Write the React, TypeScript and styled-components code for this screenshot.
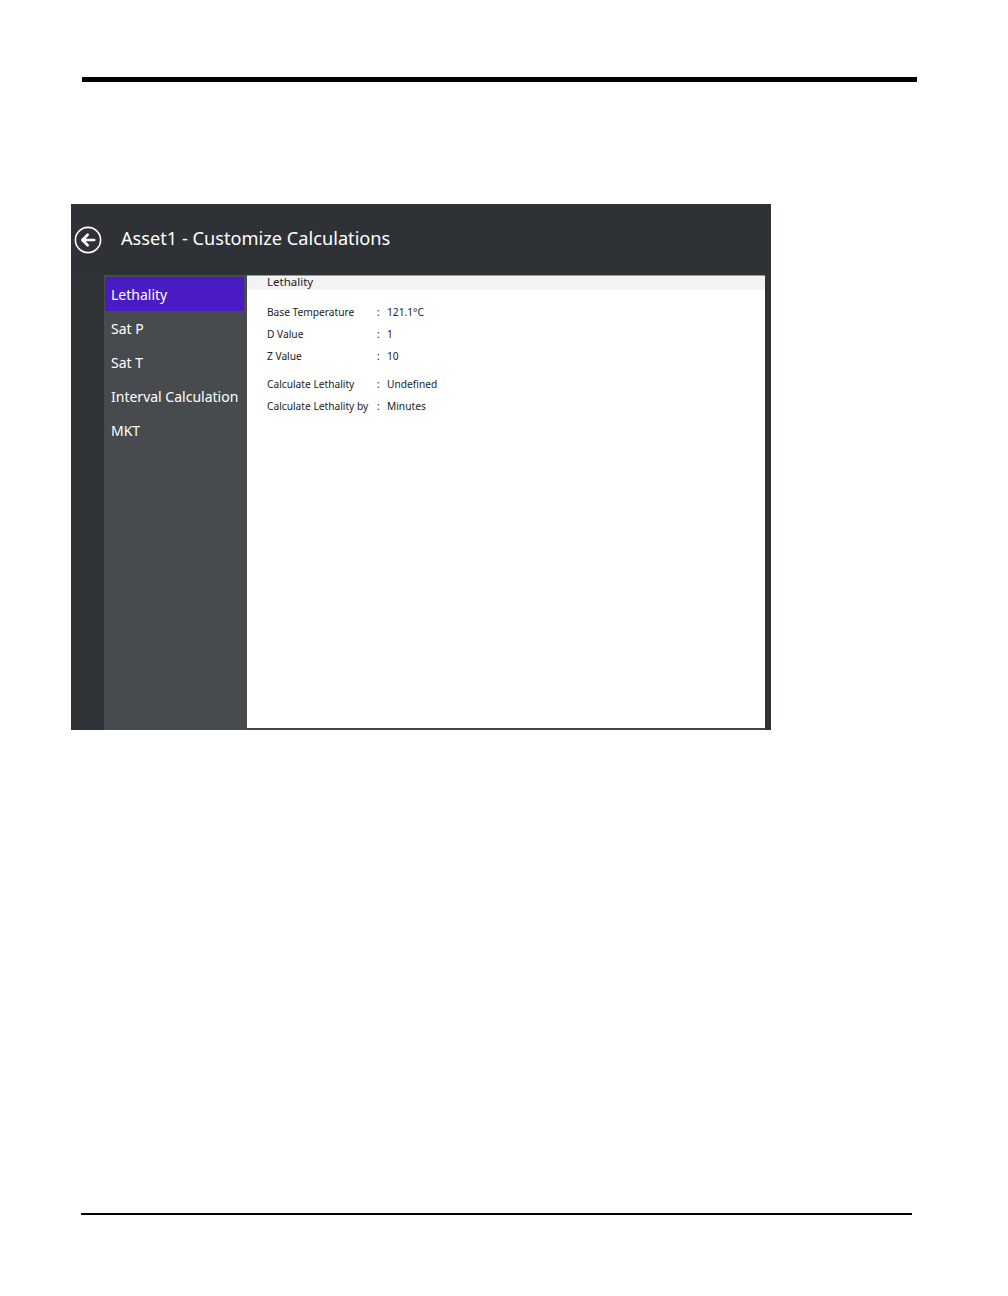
import React from 'react'
import styled, { createGlobalStyle } from 'styled-components'

const GlobalStyle = createGlobalStyle`
  html, body {
    margin: 0;
    padding: 0;
    background: #ffffff;
  }
  body {
    font-family: 'Noto Sans', 'Open Sans', sans-serif;
  }
`

const Page = styled.div`
  width: 1008px;
  height: 1296px;
  padding-top: 77px;
  box-sizing: border-box;
  display: flex;
  flex-direction: column;
`

const Rule = styled.div<{ $left: number; $width: number; $thick: number; $top: number }>`
  margin-left: ${(p) => p.$left}px;
  margin-top: ${(p) => p.$top}px;
  width: ${(p) => p.$width}px;
  height: ${(p) => p.$thick}px;
  background: #000000;
`

const Shot = styled.div`
  margin-top: 122px;
  margin-left: 71px;
  width: 700px;
  height: 526px;
  background: #2e3135;
  display: flex;
  flex-direction: column;
`

const Header = styled.header`
  height: 71px;
  display: flex;
  align-items: center;
  padding-left: 3px;
  box-sizing: border-box;
`

const BackButton = styled.div`
  width: 28px;
  height: 28px;
  display: flex;
  align-items: center;
  justify-content: center;
  margin-top: 1px;
`

const Title = styled.h1`
  margin: 0 0 4px 19px;
  font-size: 18.2px;
  font-weight: 400;
  color: #ffffff;
  letter-spacing: 0;
`

const Body = styled.div`
  flex: 1;
  display: flex;
`

const LeftStrip = styled.div`
  width: 33px;
  background: #303336;
`

const Sidebar = styled.nav`
  width: 143px;
  background: #474b4d;
  padding-top: 2px;
  display: flex;
  flex-direction: column;
`

const NavItem = styled.div<{ $active?: boolean }>`
  width: 139px;
  height: 34px;
  margin-left: 1px;
  padding-left: 6px;
  box-sizing: border-box;
  display: flex;
  align-items: center;
  font-size: 14px;
  color: #ffffff;
  background: ${(p) => (p.$active ? '#4a1bc4' : 'transparent')};
`

const PanelWrap = styled.div`
  width: 518px;
  display: flex;
  flex-direction: column;
  background: #444649;
`

const Panel = styled.section`
  height: 453px;
  background: #ffffff;
  border-top: 1px solid #9a9a9a;
  box-sizing: border-box;
`

const PanelHeading = styled.div`
  height: 14px;
  background: #f3f3f3;
  padding-left: 20px;
  font-size: 11.5px;
  line-height: 12px;
  color: #222222;
`

const Fields = styled.div`
  padding: 11px 0 0 20px;
  display: flex;
  flex-direction: column;
`

const Group = styled.div`
  display: flex;
  flex-direction: column;
  & + & {
    margin-top: 6px;
  }
`

const Row = styled.div`
  height: 22px;
  display: grid;
  grid-template-columns: 110px 10px auto;
  align-items: center;
  font-size: 10.2px;
  color: #222222;
`

const RightStrip = styled.div`
  width: 6px;
  background: #2e3135;
`

const items = ['Lethality', 'Sat P', 'Sat T', 'Interval Calculation', 'MKT']

const groups = [
  [
    ['Base Temperature', '121.1°C'],
    ['D Value', '1'],
    ['Z Value', '10'],
  ],
  [
    ['Calculate Lethality', 'Undefined'],
    ['Calculate Lethality by', 'Minutes'],
  ],
]

export default function App() {
  return (
    <>
      <GlobalStyle />
      <Page>
        <Rule $left={82} $width={835} $thick={5} $top={0} />
        <Shot>
          <Header>
            <BackButton>
              <svg width="28" height="28" viewBox="0 0 28 28" fill="none" stroke="#ffffff">
                <circle cx="14" cy="14" r="12.6" strokeWidth="1.6" />
                <path d="M20.2 14H8.5M13.6 8.8L8.4 14l5.2 5.2" strokeWidth="2.7" strokeLinecap="round" strokeLinejoin="round" />
              </svg>
            </BackButton>
            <Title>Asset1 - Customize Calculations</Title>
          </Header>
          <Body>
            <LeftStrip />
            <Sidebar>
              {items.map((item, i) => (
                <NavItem key={item} $active={i === 0}>
                  {item}
                </NavItem>
              ))}
            </Sidebar>
            <PanelWrap>
              <Panel>
                <PanelHeading>Lethality</PanelHeading>
                <Fields>
                  {groups.map((g, gi) => (
                    <Group key={gi}>
                      {g.map(([label, value]) => (
                        <Row key={label}>
                          <span>{label}</span>
                          <span>:</span>
                          <span>{value}</span>
                        </Row>
                      ))}
                    </Group>
                  ))}
                </Fields>
              </Panel>
            </PanelWrap>
            <RightStrip />
          </Body>
        </Shot>
        <Rule $left={81} $width={831} $thick={2} $top={483} />
      </Page>
    </>
  )
}
